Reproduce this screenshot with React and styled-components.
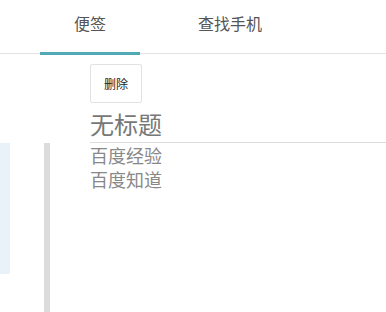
import styled, { createGlobalStyle } from 'styled-components';

const GlobalStyle = createGlobalStyle`
  html, body { margin: 0; padding: 0; background: #fff; }
  body {
    font-family: "Microsoft YaHei", "Noto Sans CJK SC", sans-serif;
    width: 386px;
    height: 312px;
    overflow: hidden;
  }
`;

const Page = styled.div`
  display: flex;
  flex-direction: column;
  height: 312px;
`;

const Header = styled.div`
  display: flex;
  flex-direction: row;
  height: 53px;
  padding-left: 40px;
  gap: 40px;
  border-bottom: 1px solid #e3e3e3;
  box-sizing: content-box;
`;

const Tab = styled.div`
  width: 100px;
  display: flex;
  justify-content: center;
  align-items: flex-start;
  padding-top: 13px;
  box-sizing: border-box;
  font-size: 16px;
  line-height: 20px;
  color: #555;
  border-bottom: 3px solid ${(p) => (p.$active ? '#52a9b6' : 'transparent')};
  margin-bottom: -2px;
`;

const Toolbar = styled.div`
  display: flex;
  flex-direction: column;
  align-items: flex-start;
  padding-left: 90px;
  padding-top: 10px;
`;

const Button = styled.button`
  width: 52px;
  height: 39px;
  background: #fff;
  border: 1px solid #e2e2e2;
  border-radius: 2px;
  font-family: inherit;
  font-size: 12px;
  color: #222;
  padding: 0;
  cursor: pointer;
`;

const Title = styled.div`
  align-self: stretch;
  margin-top: 5px;
  padding-bottom: 2px;
  font-size: 24px;
  line-height: 32px;
  color: #777;
  border-bottom: 1px solid #dcdcdc;
`;

const Body = styled.div`
  flex: 1;
  display: flex;
  flex-direction: row;
`;

const NoteList = styled.div`
  width: 10px;
  height: 131px;
  background: #e8f2f8;
`;

const Divider = styled.div`
  width: 6px;
  margin-left: 34px;
  background: #dcdcdc;
`;

const Content = styled.div`
  margin-left: 40px;
  display: flex;
  flex-direction: column;
  font-size: 18px;
  line-height: 24px;
  color: #888;
`;

export default function App() {
  return (
    <Page>
      <GlobalStyle />
      <Header>
        <Tab $active>便签</Tab>
        <Tab>查找手机</Tab>
      </Header>
      <Toolbar>
        <Button>删除</Button>
        <Title>无标题</Title>
      </Toolbar>
      <Body>
        <NoteList />
        <Divider />
        <Content>
          <div>百度经验</div>
          <div>百度知道</div>
        </Content>
      </Body>
    </Page>
  );
}
